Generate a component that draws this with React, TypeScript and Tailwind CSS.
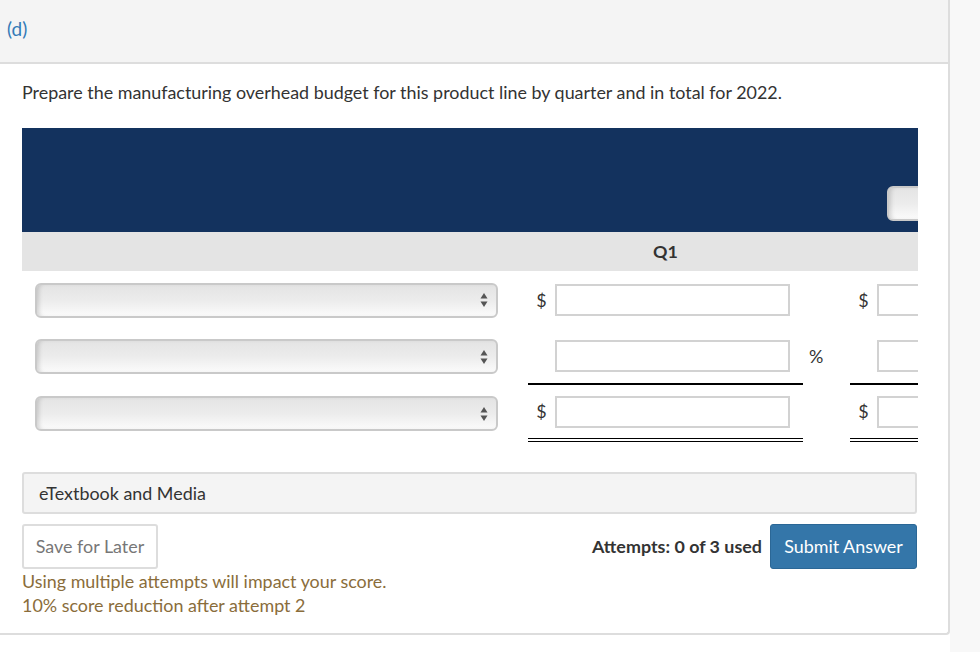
import React from "react";

const font = { fontFamily: "Lato, 'Open Sans', sans-serif" };

function Arrows() {
  return (
    <svg width="8" height="16" viewBox="0 0 8 16" className="absolute right-[8px] top-1/2 -translate-y-1/2">
      <path d="M4 1 L7.5 6.5 L0.5 6.5 Z" fill="#555" />
      <path d="M4 15 L7.5 9.5 L0.5 9.5 Z" fill="#555" />
    </svg>
  );
}

function Select() {
  return (
    <div className="relative ml-[13px] w-[463px] h-[35px] rounded-[6px] border-2 border-[#c9c9c9] bg-gradient-to-b from-[#e4e4e4] via-[#ececec] to-[#fbfbfb] shadow-[inset_4px_0_4px_-2px_rgba(0,0,0,0.15)]">
      <Arrows />
    </div>
  );
}

function Input({ w }: { w: string }) {
  return <div className={`${w} h-[32px] border-2 border-[#d2d2d2] bg-white`} />;
}

function Row({
  dollar,
  pct,
  bottom,
}: {
  dollar: boolean;
  pct: boolean;
  bottom: "none" | "single" | "double";
}) {
  const h = bottom === "none" ? "h-[56px]" : "h-[57px]";
  const cellBorder =
    bottom === "single"
      ? "border-b-2 border-black"
      : bottom === "double"
      ? "border-b-[4px] border-double border-black"
      : "";
  return (
    <div className={`flex ${h}`}>
      <div className="w-[506px] shrink-0 flex items-center">
        <Select />
      </div>
      <div className={`w-[275px] shrink-0 flex items-center ${cellBorder}`}>
        <span className="w-[27px] text-center text-[17.9px] text-[#333]">{dollar ? "$" : ""}</span>
        <Input w="w-[235px]" />
      </div>
      <div className="w-[47px] shrink-0 flex items-center pl-[6px] text-[17.9px] text-[#333]">
        {pct ? "%" : ""}
      </div>
      <div className={`w-[275px] shrink-0 flex items-center ${cellBorder}`}>
        <span className="w-[27px] text-center text-[17.9px] text-[#333]">{dollar ? "$" : ""}</span>
        <Input w="w-[234px]" />
      </div>
    </div>
  );
}

export default function App() {
  return (
    <div className="w-[980px] h-[652px] bg-white flex overflow-hidden" style={font}>
      <div className="w-[950px] shrink-0 flex flex-col">
        <div className="w-[950px] border-r-2 border-b-2 border-[#dddddd] rounded-br-[4px] bg-white">
          <div className="h-[64px] bg-[#f4f4f4] border-b-2 border-[#dddddd] flex items-center pl-[7px]">
            <span className="text-[19px] text-[#337ab7] -mt-[3px]">(d)</span>
          </div>
          <div className="pt-[16px] pl-[22px] text-[17.9px] leading-[24px] text-[#333]">
            Prepare the manufacturing overhead budget for this product line by quarter and in total for 2022.
          </div>
          <div className="ml-[22px] mt-[24px] w-[896px] overflow-hidden">
            <div className="w-[1400px]">
              <div className="relative h-[104px] bg-[#13325e]">
                <div className="absolute left-[865px] top-[58px] w-[60px] h-[35px] rounded-[6px] border-2 border-[#c9c9c9] bg-gradient-to-b from-[#e4e4e4] via-[#ececec] to-[#fbfbfb] shadow-[inset_4px_0_4px_-2px_rgba(0,0,0,0.15)]" />
              </div>
              <div className="h-[39px] bg-[#e4e4e4] flex">
                <div className="w-[506px]" />
                <div className="w-[275px] flex items-center justify-center font-bold text-[17.9px] text-[#333]">Q1</div>
              </div>
              <div className="h-[1px]" />
              <Row dollar pct={false} bottom="none" />
              <Row dollar={false} pct bottom="single" />
              <Row dollar pct={false} bottom="double" />
            </div>
          </div>
          <div className="ml-[22px] mr-[31px] mt-[30px] h-[42px] rounded-[3px] border-2 border-[#dddddd] bg-[#f4f4f4] flex items-center pl-[15px] text-[17.9px] text-[#333]">
            eTextbook and Media
          </div>
          <div className="ml-[22px] mr-[31px] mt-[10px] flex items-start justify-between">
            <div className="h-[45px] w-[136px] rounded-[3px] border-2 border-[#dddddd] bg-white flex items-center justify-center text-[17.9px] text-[#777]">
              Save for Later
            </div>
            <div className="flex items-start">
              <span className="mt-[9px] mr-[8px] font-bold text-[17.9px] text-[#333]">Attempts: 0 of 3 used</span>
              <div className="h-[45px] w-[147px] rounded-[3px] border border-[#2b6796] bg-[#3476a9] flex items-center justify-center text-[17.9px] text-white">
                Submit Answer
              </div>
            </div>
          </div>
          <div className="pl-[22px] pb-[16px] text-[17.9px] leading-[24px] text-[#8a6d3b]">
            <div>Using multiple attempts will impact your score.</div>
            <div>10% score reduction after attempt 2</div>
          </div>
        </div>
      </div>
      <div className="flex-1 bg-[#f8f8f8]" />
    </div>
  );
}
